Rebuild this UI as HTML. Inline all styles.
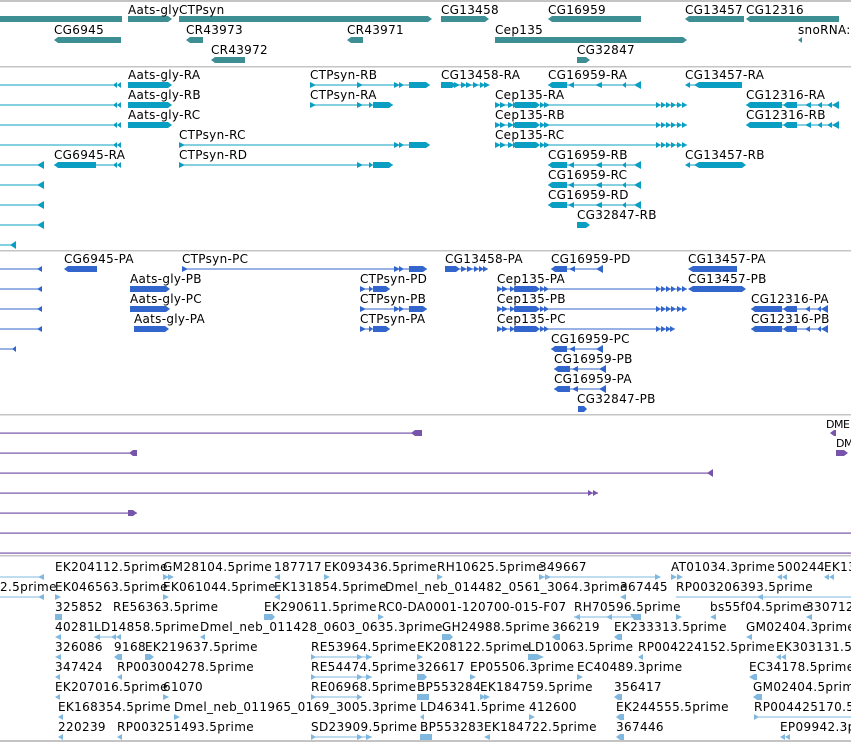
<!DOCTYPE html>
<html><head><meta charset="utf-8"><style>
html,body{margin:0;padding:0;background:#fff;width:851px;height:742px;overflow:hidden}
svg{display:block}
text{font-family:"DejaVu Sans","Liberation Sans",sans-serif;font-size:12px;fill:#000;letter-spacing:0.3px}
.s text{letter-spacing:0.35px}
</style></head><body>
<svg width="851" height="742" viewBox="0 0 851 742" xmlns="http://www.w3.org/2000/svg">
<g fill="#c4c4c4">
<rect x="0" y="0" width="851" height="2"/>
<rect x="0" y="66" width="851" height="1.5"/>
<rect x="0" y="250" width="851" height="1.5"/>
<rect x="0" y="414" width="851" height="1.5"/>
<rect x="0" y="555" width="851" height="1.5"/>
<rect x="0" y="740" width="851" height="2"/>
</g>

<g fill="#3d8f94">
<polygon points="0,16 122,16 122,22 0,22"/>
<polygon points="128,16 168,16 172,19 168,22 128,22"/>
<polygon points="179,16 428,16 432,19 428,22 179,22"/>
<polygon points="441,16 485,16 489,19 485,22 441,22"/>
<polygon points="548,19 552,16 641,16 641,22 552,22"/>
<polygon points="685,19 689,16 744,16 744,22 689,22"/>
<polygon points="746,19 750,16 839,16 839,22 750,22"/>
<polygon points="54,40 58,37 121,37 121,43 58,43"/>
<polygon points="186,40 190,37 203,37 203,43 190,43"/>
<polygon points="347,40 351,37 363,37 363,43 351,43"/>
<polygon points="495,37 683,37 687,40 683,43 495,43"/>
<polygon points="798,40 802,37 802,43"/>
<polygon points="211,60 215,57 245,57 245,63 215,63"/>
<polygon points="577,57 586,57 590,60 586,63 577,63"/>
</g>
<text x="128" y="14">Aats-gly</text><text x="179" y="14">CTPsyn</text><text x="441" y="14">CG13458</text><text x="548" y="14">CG16959</text><text x="685" y="14">CG13457</text><text x="746" y="14">CG12316</text>
<text x="54" y="34">CG6945</text><text x="186" y="34">CR43973</text><text x="347" y="34">CR43971</text><text x="495" y="34">Cep135</text><text x="798" y="34">snoRNA:M</text>
<text x="211" y="54">CR43972</text><text x="577" y="54">CG32847</text>

<g fill="#0a9fc2" stroke="none">
<rect x="0" y="84.5" width="121" height="1"/><polygon points="113,85 117,82 117,88"/><polygon points="117,85 121,82 121,88"/>
<rect x="0" y="104.5" width="121" height="1"/><polygon points="113,105 117,102 117,108"/><polygon points="117,105 121,102 121,108"/>
<rect x="0" y="124.5" width="121" height="1"/><polygon points="113,125 117,122 117,128"/><polygon points="117,125 121,122 121,128"/>
<rect x="0" y="144.5" width="121" height="1"/><polygon points="113,145 117,142 117,148"/><polygon points="117,145 121,142 121,148"/>
<rect x="0" y="164.5" width="44" height="1"/><polygon points="37,165 44,161 44,169"/>
<rect x="0" y="184.5" width="44" height="1"/><polygon points="37,185 44,181 44,189"/>
<rect x="0" y="204.5" width="44" height="1"/><polygon points="37,205 44,201 44,209"/>
<rect x="0" y="224.5" width="44" height="1"/><polygon points="37,225 44,221 44,229"/>
<rect x="0" y="244.5" width="16" height="1"/><polygon points="10,245 16,241 16,249"/>
<polygon points="128,82 168,82 172,85 168,88 128,88"/>
<polygon points="128,102 168,102 172,105 168,108 128,108"/>
<polygon points="128,122 168,122 172,125 168,128 128,128"/>
<rect x="310" y="84.5" width="120" height="1"/><polygon points="310,82 316,85 310,88"/><polygon points="357,82 363,85 357,88"/><polygon points="394,82 400,85 394,88"/><polygon points="399,82 404,85 399,88"/><polygon points="409,82 426,82 430,85 426,88 409,88"/>
<rect x="310" y="104.5" width="83" height="1"/><polygon points="310,102 316,105 310,108"/><polygon points="357,102 363,105 357,108"/><polygon points="369,102 373,105 369,108"/><polygon points="373,102 389,102 393,105 389,108 373,108"/>
<rect x="179" y="144.5" width="251" height="1"/><polygon points="179,142 185,145 179,148"/><polygon points="394,142 400,145 394,148"/><polygon points="399,142 404,145 399,148"/><polygon points="409,142 426,142 430,145 426,148 409,148"/>
<rect x="179" y="164.5" width="214" height="1"/><polygon points="179,162 185,165 179,168"/><polygon points="357,162 363,165 357,168"/><polygon points="369,162 373,165 369,168"/><polygon points="373,162 389,162 393,165 389,168 373,168"/>
<rect x="54" y="164.5" width="67" height="1"/><polygon points="54,165 58,162 96,162 96,168 58,168"/><polygon points="113,165 117,162 117,168"/><polygon points="117,165 121,162 121,168"/>
<rect x="441" y="84.5" width="48" height="1"/>
<polygon points="441,82 452,82 456,85 452,88 441,88"/><polygon points="454,82 460,85 454,88"/><polygon points="461,82 467,85 461,88"/><polygon points="466,82 472,85 466,88"/><polygon points="473,82 479,85 473,88"/><polygon points="480,82 485,85 480,88"/><polygon points="484,82 490,85 484,88"/>
<g id="c16">
<rect x="548" y="84.5" width="93" height="1"/><polygon points="548,85 552,82 567,82 567,88 552,88"/><polygon points="568,85 574,82 574,88"/><polygon points="595,85 602,82 602,88"/><polygon points="622,85 626,82 626,88"/><polygon points="634,85 641,81 641,89"/>
</g>
<use href="#c16" y="80"/><use href="#c16" y="100"/><use href="#c16" y="120"/>
<g id="cep">
<rect x="495" y="104.5" width="192" height="1"/>
<polygon points="495,102 501,105 495,108"/><polygon points="500,102 506,105 500,108"/><polygon points="508,102 514,105 508,108"/><polygon points="513,102 519,105 513,108"/><polygon points="515,102 536,102 540,105 536,108 515,108"/><polygon points="540,102 545,105 540,108"/><polygon points="544,102 550,105 544,108"/>
<polygon points="656,102 661,105 656,108"/><polygon points="661,102 666,105 661,108"/><polygon points="666,102 671,105 666,108"/><polygon points="671,102 676,105 671,108"/><polygon points="677,102 682,105 677,108"/><polygon points="682,102 687,105 682,108"/>
</g>
<use href="#cep" y="20"/><use href="#cep" y="40"/>
<polygon points="685,85 690,82 690,88"/><rect x="690" y="84.5" width="6" height="1"/><polygon points="694,85 699,82 742,82 742,88 699,88"/>
<polygon points="685,165 690,162 690,168"/><rect x="690" y="164.5" width="6" height="1"/><polygon points="694,165 699,162 742,162 746,165 742,168 699,168"/>
<g id="c123">
<rect x="746" y="104.5" width="93" height="1"/><polygon points="746,105 750,102 782,102 782,108 750,108"/><polygon points="783,105 787,102 797,102 797,108 787,108"/><polygon points="805,105 811,102 811,108"/><polygon points="817,105 822,102 822,108"/><polygon points="827,105 832,102 832,108"/><polygon points="832,105 839,101 839,109"/>
</g>
<use href="#c123" y="20"/>
<polygon points="577,222 586,222 590,225 586,228 577,228"/>
</g>
<text x="128" y="79">Aats-gly-RA</text><text x="310" y="79">CTPsyn-RB</text><text x="441" y="79">CG13458-RA</text><text x="548" y="79">CG16959-RA</text><text x="685" y="79">CG13457-RA</text>
<text x="128" y="99">Aats-gly-RB</text><text x="310" y="99">CTPsyn-RA</text><text x="495" y="99">Cep135-RA</text><text x="746" y="99">CG12316-RA</text>
<text x="128" y="119">Aats-gly-RC</text><text x="495" y="119">Cep135-RB</text><text x="746" y="119">CG12316-RB</text>
<text x="179" y="139">CTPsyn-RC</text><text x="495" y="139">Cep135-RC</text>
<text x="54" y="159">CG6945-RA</text><text x="179" y="159">CTPsyn-RD</text><text x="548" y="159">CG16959-RB</text><text x="685" y="159">CG13457-RB</text>
<text x="548" y="179">CG16959-RC</text><text x="548" y="199">CG16959-RD</text><text x="577" y="219">CG32847-RB</text>

<g fill="#3366cc">
<rect x="0" y="268.5" width="42" height="1"/><polygon points="37,269 42,266 42,272"/>
<rect x="0" y="288.5" width="42" height="1"/><polygon points="37,289 42,286 42,292"/>
<rect x="0" y="308.5" width="42" height="1"/><polygon points="37,309 42,306 42,312"/>
<rect x="0" y="328.5" width="42" height="1"/><polygon points="37,329 42,326 42,332"/>
<rect x="0" y="348.5" width="16" height="1"/><polygon points="12,349 16,346 16,352"/>
<polygon points="64,269 68,266 97,266 97,272 68,272"/>
<polygon points="130,286 166,286 170,289 166,292 130,292"/>
<polygon points="130,306 166,306 170,309 166,312 130,312"/>
<polygon points="134,326 165,326 169,329 165,332 134,332"/>
<rect x="182" y="268.5" width="245" height="1"/><polygon points="182,266 188,269 182,272"/><polygon points="394,266 400,269 394,272"/><polygon points="399,266 404,269 399,272"/><polygon points="409,266 423,266 427,269 423,272 409,272"/>
<rect x="360" y="288.5" width="30" height="1"/><polygon points="360,286 366,289 360,292"/><polygon points="369,286 373,289 369,292"/><polygon points="373,286 386,286 390,289 386,292 373,292"/>
<rect x="360" y="308.5" width="67" height="1"/><polygon points="360,306 366,309 360,312"/><polygon points="394,306 400,309 394,312"/><polygon points="399,306 404,309 399,312"/><polygon points="409,306 423,306 427,309 423,312 409,312"/>
<rect x="360" y="328.5" width="30" height="1"/><polygon points="360,326 366,329 360,332"/><polygon points="369,326 373,329 369,332"/><polygon points="373,326 386,326 390,329 386,332 373,332"/>
<rect x="445" y="268.5" width="43" height="1"/><polygon points="445,266 456,266 460,269 456,272 445,272"/><polygon points="461,266 467,269 461,272"/><polygon points="467,266 473,269 467,272"/><polygon points="474,266 479,269 474,272"/><polygon points="479,266 484,269 479,272"/><polygon points="483,266 488,269 483,272"/>
<g id="p16"><rect x="551" y="268.5" width="52" height="1"/><polygon points="551,269 555,266 567,266 567,272 555,272"/><polygon points="569,269 575,266 575,272"/><polygon points="596,269 603,265 603,273"/></g>
<use href="#p16" y="80"/><use href="#p16" x="3" y="100"/><use href="#p16" x="3" y="120"/>
<polygon points="688,269 693,266 737,266 737,272 693,272"/>
<polygon points="688,289 693,286 742,286 746,289 742,292 693,292"/>
<g id="pcep"><rect x="497" y="288.5" width="190" height="1"/><polygon points="497,286 503,289 497,292"/><polygon points="502,286 508,289 502,292"/><polygon points="510,286 515,289 510,292"/><polygon points="514,286 519,289 514,292"/><polygon points="515,286 536,286 540,289 536,292 515,292"/><polygon points="540,286 545,289 540,292"/><polygon points="544,286 549,289 544,292"/>
<polygon points="656,286 661,289 656,292"/><polygon points="661,286 666,289 661,292"/><polygon points="666,286 671,289 666,292"/><polygon points="671,286 676,289 671,292"/><polygon points="677,286 682,289 677,292"/><polygon points="682,286 687,289 682,292"/></g>
<use href="#pcep" y="20"/>
<rect x="497" y="328.5" width="178" height="1"/><polygon points="497,326 503,329 497,332"/><polygon points="502,326 508,329 502,332"/><polygon points="510,326 515,329 510,332"/><polygon points="514,326 519,329 514,332"/><polygon points="515,326 536,326 540,329 536,332 515,332"/><polygon points="540,326 545,329 540,332"/><polygon points="544,326 549,329 544,332"/><polygon points="656,326 661,329 656,332"/><polygon points="661,326 666,329 661,332"/><polygon points="666,326 671,329 666,332"/><polygon points="670,326 675,329 670,332"/>
<g id="p123"><rect x="751" y="308.5" width="77" height="1"/><polygon points="751,309 755,306 782,306 782,312 755,312"/><polygon points="783,309 787,306 797,306 797,312 787,312"/><polygon points="805,309 810,306 810,312"/><polygon points="817,309 821,306 821,312"/><polygon points="821,309 828,305 828,313"/></g>
<use href="#p123" y="20"/>
<polygon points="578,406 584,406 587,409 584,412 578,412"/>
</g>
<text x="64" y="263">CG6945-PA</text><text x="182" y="263">CTPsyn-PC</text><text x="445" y="263">CG13458-PA</text><text x="551" y="263">CG16959-PD</text><text x="688" y="263">CG13457-PA</text>
<text x="130" y="283">Aats-gly-PB</text><text x="360" y="283">CTPsyn-PD</text><text x="497" y="283">Cep135-PA</text><text x="688" y="283">CG13457-PB</text>
<text x="130" y="303">Aats-gly-PC</text><text x="360" y="303">CTPsyn-PB</text><text x="497" y="303">Cep135-PB</text><text x="751" y="303">CG12316-PA</text>
<text x="134" y="323">Aats-gly-PA</text><text x="360" y="323">CTPsyn-PA</text><text x="497" y="323">Cep135-PC</text><text x="751" y="323">CG12316-PB</text>
<text x="551" y="343">CG16959-PC</text><text x="554" y="363">CG16959-PB</text><text x="554" y="383">CG16959-PA</text><text x="577" y="403">CG32847-PB</text>

<g fill="#7755aa">
<rect x="0" y="432.5" width="422" height="1.2"/><polygon points="411,433 415,430 422,430 422,436 415,436"/>
<rect x="0" y="452.5" width="137" height="1.2"/><polygon points="129,453 133,450 137,450 137,456 133,456"/>
<rect x="0" y="472.5" width="713" height="1.2"/><polygon points="707,473 713,469 713,477"/>
<rect x="0" y="492.5" width="598" height="1.2"/><polygon points="588,490 593,493 588,496"/><polygon points="593,490 598,493 593,496"/>
<rect x="0" y="512.5" width="137" height="1.2"/><polygon points="128,510 133,510 137,513 133,516 128,516"/>
<rect x="0" y="532.5" width="851" height="1.2"/>
<rect x="0" y="552.5" width="851" height="1.2"/>
<polygon points="830,433 834,430 836,430 836,436 834,436"/>
<polygon points="836,450 844,450 848,453 844,456 836,456"/>
</g>
<text x="826" y="428" style="font-size:11px;letter-spacing:-0.5px">DME</text><text x="836" y="447" style="font-size:11px;letter-spacing:-0.5px">DM</text>

<g fill="#80b8e0">
<rect x="0" y="576.5" width="44" height="1"/><polygon points="38,577 44,574 44,580"/>
<rect x="0" y="596.5" width="44" height="1"/><polygon points="38,597 44,594 44,600"/>
<polygon points="163,574 169,577 163,580"/><polygon points="168,574 174,577 168,580"/>
<polygon points="274,577 280,574 280,580"/><polygon points="324,574 330,577 324,580"/><polygon points="437,574 443,577 437,580"/>
<rect x="539" y="576.5" width="121" height="1"/><polygon points="539,574 545,577 539,580"/><polygon points="545,574 551,577 545,580"/><polygon points="655,574 661,577 655,580"/>
<polygon points="671,574 677,577 671,580"/><polygon points="677,574 683,577 677,580"/><polygon points="777,577 782,574 782,580"/><polygon points="782,577 787,574 787,580"/><polygon points="824,577 829,574 829,580"/><polygon points="829,577 834,574 834,580"/>
<polygon points="55,594 61,597 55,600"/><polygon points="163,594 169,597 163,600"/><polygon points="274,597 280,594 280,600"/><polygon points="620,597 626,594 626,600"/>
<rect x="676" y="596.5" width="175" height="1"/><polygon points="757,597 763,594 763,600"/>
<rect x="55" y="614" width="7" height="6"/><polygon points="264,614 272,614 275,617 272,620 264,620"/><polygon points="378,614 384,617 378,620"/><polygon points="676,614 682,617 676,620"/>
<rect x="574" y="616.5" width="67" height="1"/><polygon points="574,617 580,614 580,620"/><polygon points="606,617 612,614 612,620"/><polygon points="630,614 641,614 641,620 634,620"/>
<polygon points="710,617 716,614 716,620"/><polygon points="806,617 812,614 812,620"/>
<polygon points="55,637 61,634 61,640"/><rect x="94" y="636.5" width="27" height="1"/><polygon points="94,637 100,634 100,640"/><polygon points="111,637 116,634 116,640"/><polygon points="116,637 121,634 121,640"/>
<polygon points="200,637 205,634 205,640"/><polygon points="442,634 450,634 453,637 450,640 442,640"/><polygon points="552,637 556,634 560,634 560,640 556,640"/><polygon points="614,637 618,634 622,634 622,640 618,640"/><polygon points="746,637 752,634 752,640"/>
<polygon points="55,657 61,654 61,660"/><polygon points="114,657 118,654 122,654 122,660 118,660"/><polygon points="145,654 150,654 154,657 150,660 145,660"/>
<rect x="311" y="656.5" width="61" height="1"/><polygon points="311,654 316,657 311,660"/><polygon points="357,654 363,657 357,660"/><polygon points="366,654 372,657 366,660"/>
<polygon points="417,654 423,657 417,660"/><polygon points="528,654 537,654 540,657 537,660 528,660"/><polygon points="537,654 544,657 537,660"/><polygon points="638,657 643,654 643,660"/><polygon points="776,657 781,654 781,660"/><polygon points="781,657 786,654 786,660"/>
<polygon points="55,677 60,674 60,680"/><polygon points="117,677 122,674 122,680"/>
<rect x="311" y="676.5" width="61" height="1"/><polygon points="311,674 316,677 311,680"/><polygon points="357,674 363,677 357,680"/><polygon points="366,674 372,677 366,680"/>
<polygon points="417,674 424,674 427,677 424,680 417,680"/><polygon points="470,674 476,677 470,680"/><polygon points="577,674 583,677 577,680"/><polygon points="749,677 754,674 757,674 757,680 754,680"/>
<polygon points="55,697 60,694 60,700"/><polygon points="163,694 169,697 163,700"/>
<rect x="311" y="696.5" width="51" height="1"/><polygon points="311,694 316,697 311,700"/><polygon points="357,694 362,697 357,700"/>
<rect x="417" y="694" width="12" height="6"/><polygon points="480,694 486,697 480,700"/><polygon points="484,694 490,697 484,700"/><polygon points="614,697 618,694 622,694 622,700 618,700"/><polygon points="753,697 757,694 762,694 762,700 757,700"/>
<polygon points="58,717 63,714 63,720"/><polygon points="174,714 180,717 174,720"/><polygon points="420,717 424,714 424,720"/><polygon points="529,714 535,717 529,720"/><polygon points="616,717 620,714 624,714 624,720 620,720"/>
<rect x="754" y="716.5" width="97" height="1"/><polygon points="754,714 759,717 754,720"/>
<polygon points="58,737 63,734 63,740"/><polygon points="117,737 122,734 122,740"/>
<rect x="311" y="736.5" width="61" height="1"/><polygon points="311,734 316,737 311,740"/><polygon points="357,734 363,737 357,740"/><polygon points="366,734 372,737 366,740"/>
<rect x="420" y="734" width="12" height="6"/><polygon points="484,737 490,734 490,740"/><polygon points="616,737 620,734 624,734 624,740 620,740"/><polygon points="780,737 785,734 785,740"/><polygon points="785,737 790,734 790,740"/>
</g>
<g class="s">
<text x="55" y="571">EK204112.5prime</text><text x="163" y="571">GM28104.5prime</text><text x="274" y="571">187717</text><text x="324" y="571">EK093436.5prime</text><text x="437" y="571">RH10625.5prime</text><text x="539" y="571">349667</text><text x="671" y="571">AT01034.3prime</text><text x="777" y="571">500244</text><text x="824" y="571">EK13</text>
<text x="-8" y="591">52.5prime</text><text x="55" y="591">EK046563.5prime</text><text x="163" y="591">EK061044.5prime</text><text x="274" y="591">EK131854.5prime</text><text x="385" y="591">Dmel_neb_014482_0561_3064.3prime</text><text x="620" y="591">367445</text><text x="676" y="591">RP003206393.5prime</text>
<text x="55" y="611">325852</text><text x="113" y="611">RE56363.5prime</text><text x="264" y="611">EK290611.5prime</text><text x="378" y="611">RC0-DA0001-120700-015-F07</text><text x="574" y="611">RH70596.5prime</text><text x="710" y="611">bs55f04.5prime</text><text x="806" y="611">330712</text>
<text x="55" y="631">40281</text><text x="94" y="631">LD14858.5prime</text><text x="200" y="631">Dmel_neb_011428_0603_0635.3prime</text><text x="442" y="631">GH24988.5prime</text><text x="552" y="631">366219</text><text x="614" y="631">EK233313.5prime</text><text x="746" y="631">GM02404.3prime</text>
<text x="55" y="651">326086</text><text x="114" y="651">9168</text><text x="145" y="651">EK219637.5prime</text><text x="311" y="651">RE53964.5prime</text><text x="417" y="651">EK208122.5prime</text><text x="528" y="651">LD10063.5prime</text><text x="638" y="651">RP004224152.5prime</text><text x="776" y="651">EK303131.5</text>
<text x="55" y="671">347424</text><text x="117" y="671">RP003004278.5prime</text><text x="311" y="671">RE54474.5prime</text><text x="417" y="671">326617</text><text x="470" y="671">EP05506.3prime</text><text x="577" y="671">EC40489.3prime</text><text x="749" y="671">EC34178.5prime</text>
<text x="55" y="691">EK207016.5prime</text><text x="163" y="691">61070</text><text x="311" y="691">RE06968.5prime</text><text x="417" y="691">BP553284</text><text x="480" y="691">EK184759.5prime</text><text x="614" y="691">356417</text><text x="753" y="691">GM02404.5prim</text>
<text x="58" y="711">EK168354.5prime</text><text x="174" y="711">Dmel_neb_011965_0169_3005.3prime</text><text x="420" y="711">LD46341.5prime</text><text x="529" y="711">412600</text><text x="616" y="711">EK244555.5prime</text><text x="754" y="711">RP004425170.5</text>
<text x="58" y="731">220239</text><text x="117" y="731">RP003251493.5prime</text><text x="311" y="731">SD23909.5prime</text><text x="420" y="731">BP553283</text><text x="484" y="731">EK184722.5prime</text><text x="616" y="731">367446</text><text x="780" y="731">EP09942.3p</text>
</g>
</svg>
</body></html>
